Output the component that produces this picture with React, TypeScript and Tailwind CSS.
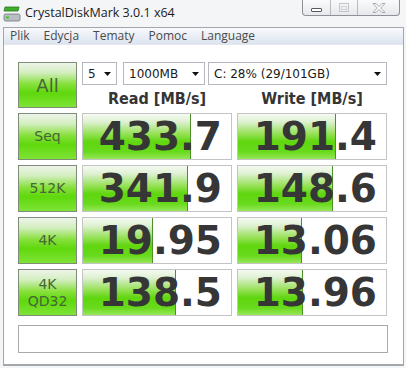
import React from 'react'

/* ── Benchmark data ─────────────────────────────────────────────── */
const ROWS = [
  { label: ['Seq'], read: '433.7', readPct: 73, write: '191.4', writePct: 66 },
  { label: ['512K'], read: '341.9', readPct: 71, write: '148.6', writePct: 64 },
  { label: ['4K'], read: '19.95', readPct: 47, write: '13.06', writePct: 43 },
  { label: ['4K', 'QD32'], read: '138.5', readPct: 63, write: '13.96', writePct: 44 },
]

const MENU = ['Plik', 'Edycja', 'Tematy', 'Pomoc', 'Language']

/* ── Small pieces ───────────────────────────────────────────────── */
function AppIcon() {
  return (
    <svg width="18" height="16" viewBox="0 0 18 16" aria-hidden>
      <path d="M2 1 L16 1 L15 5 L1 5 Z" fill="#3fae2a" stroke="#2a7a1c" strokeWidth="0.8" />
      <rect x="1" y="8" width="16" height="7" rx="1.5" fill="#b9bec4" stroke="#6f757c" strokeWidth="0.8" />
      <rect x="3" y="10.5" width="3" height="2" fill="#4cc234" />
    </svg>
  )
}

function Caret() {
  return (
    <svg width="7" height="4" viewBox="0 0 7 4" aria-hidden>
      <path d="M0 0 L7 0 L3.5 4 Z" fill="#111" />
    </svg>
  )
}

function Combo({ text, width }: { text: string; width: string }) {
  return (
    <div className={`${width} h-[23px] flex items-center justify-between pl-[5px] pr-[5px] bg-white border border-[#b5b8be] text-[12px] text-[#1a1a1a] font-['DejaVu_Sans',sans-serif]`}>
      <span>{text}</span>
      <Caret />
    </div>
  )
}

function GreenButton({ lines, big }: { lines: string[]; big?: boolean }) {
  return (
    <div className="flex flex-col items-center justify-center border border-[#7f8c78] bg-[linear-gradient(to_bottom,#eef4ea_0%,#d2eebe_22%,#86e03a_48%,#5fd80c_68%,#7ee436_100%)] text-[#466636] font-['DejaVu_Sans',sans-serif] leading-[17px]">
      {lines.map((l) => (
        <span key={l} className={big ? 'text-[18px]' : 'text-[14px]'}>{l}</span>
      ))}
    </div>
  )
}

function ValueBox({ value, pct }: { value: string; pct: number }) {
  return (
    <div className="relative h-[47px] bg-white border border-[#c4c4c4] overflow-hidden">
      <div
        className="absolute left-0 top-0 bottom-0 border-r border-[#4f8f2a] bg-[linear-gradient(to_bottom,#f6faf3_0%,#dcf0cf_18%,#96e156_44%,#5fd60e_62%,#68da1c_84%,#98e65a_100%)]"
        style={{ width: `${pct}%` }}
      />
      <div className="relative h-full flex items-center justify-end pr-[9px] text-[39px] font-bold leading-none text-[#363636] font-['DejaVu_Sans',sans-serif]">
        {value}
      </div>
    </div>
  )
}

/* ── Window ─────────────────────────────────────────────────────── */
export default function App() {
  return (
    <div className="relative w-[406px] h-[368px] bg-[#f4f5f7] overflow-hidden">
      {/* Title bar */}
      <div className="h-[27px] flex items-center pl-[3px] gap-[4px]">
        <AppIcon />
        <span className="text-[12.5px] text-[#1c1c1c] font-['Open_Sans',sans-serif]">CrystalDiskMark 3.0.1 x64</span>
      </div>

      {/* Caption buttons */}
      <div className="absolute right-[6px] top-0 h-[16px] w-[98px] flex border border-t-0 border-[#8d9197] rounded-b-[4px] bg-[linear-gradient(to_bottom,#fbfbfc,#e6e8eb)] overflow-hidden">
        <div className="w-[28px] flex items-center justify-center border-r border-[#b7bbc0]">
          <div className="w-[11px] h-[4px] mt-[5px] border border-[#555a60] rounded-[1px] bg-white" />
        </div>
        <div className="w-[27px] flex items-center justify-center border-r border-[#b7bbc0]">
          <div className="w-[10px] h-[9px] border border-[#c2c5c9] flex items-center justify-center">
            <div className="w-[6px] h-[4px] border border-[#d0d3d6]" />
          </div>
        </div>
        <div className="flex-1 flex items-center justify-center">
          <svg width="14" height="10" viewBox="0 0 14 10" aria-hidden>
            <path d="M1 0.5 L4 0.5 L7 3.5 L10 0.5 L13 0.5 L8.8 5 L13 9.5 L10 9.5 L7 6.5 L4 9.5 L1 9.5 L5.2 5 Z" fill="#fbfbfb" stroke="#9ea3a9" strokeWidth="0.9" />
          </svg>
        </div>
      </div>

      {/* Frame */}
      <div className="ml-[3px] w-[401px] h-[339px] border border-[#a3a6aa] border-b-2 bg-white flex flex-col">
        {/* Menu bar */}
        <div className="h-[17px] flex items-center gap-[14px] pl-[6px] bg-[linear-gradient(to_bottom,#f7f9fc,#dde4ef)] border-b border-[#e3e7ee] text-[12px] text-[#4a4a4a] font-['Open_Sans',sans-serif]">
          {MENU.map((m) => (
            <span key={m}>{m}</span>
          ))}
        </div>

        {/* Client */}
        <div className="pl-[14px] pt-[17px] flex flex-col">
          <div className="grid grid-cols-[59px_150px_150px] gap-[5px]">
            <div className="h-[46px] grid">
              <GreenButton lines={['All']} big />
            </div>
            <div className="col-span-2 flex flex-col">
              <div className="flex">
                <Combo text="5" width="w-[35px]" />
                <div className="w-[6px]" />
                <Combo text="1000MB" width="w-[82px]" />
                <div className="w-[3px]" />
                <Combo text="C: 28% (29/101GB)" width="w-[179px]" />
              </div>
              <div className="h-[23px] grid grid-cols-[150px_150px] gap-[5px] pt-[2px] text-[16px] font-bold text-[#353535] font-['DejaVu_Sans_Condensed','DejaVu_Sans',sans-serif]">
                <span className="text-center">Read [MB/s]</span>
                <span className="text-center">Write [MB/s]</span>
              </div>
            </div>

            {ROWS.map((r) => (
              <React.Fragment key={r.read}>
                <div className="h-[47px] grid">
                  <GreenButton lines={r.label} />
                </div>
                <ValueBox value={r.read} pct={r.readPct} />
                <ValueBox value={r.write} pct={r.writePct} />
              </React.Fragment>
            ))}
          </div>

          {/* Status box */}
          <div className="mt-[9px] w-[370px] h-[28px] border border-[#a9a9a9] bg-white" />
        </div>
      </div>
    </div>
  )
}
